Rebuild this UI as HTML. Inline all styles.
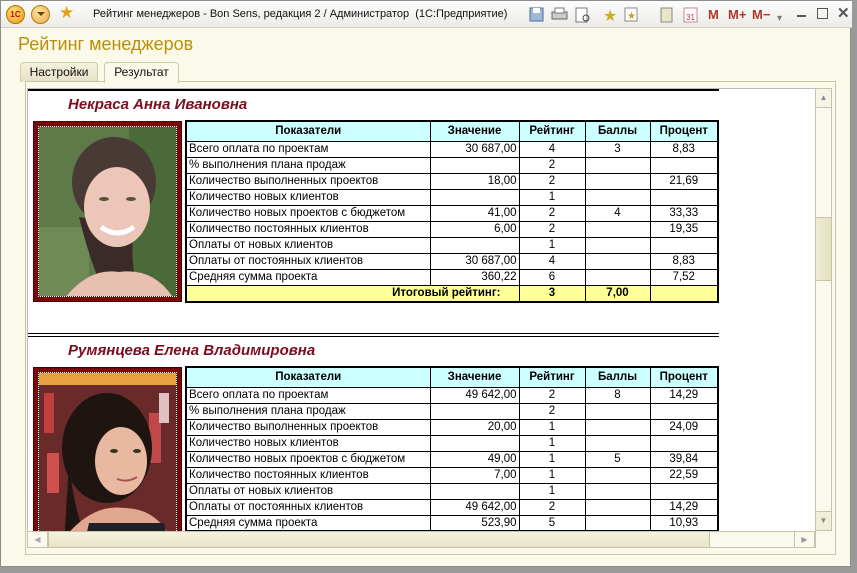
<!DOCTYPE html>
<html><head><meta charset="utf-8">
<style>
*{margin:0;padding:0;box-sizing:border-box}
body{width:857px;height:573px;overflow:hidden;background:#9a9a9a;font-family:"Liberation Sans",sans-serif;position:relative}
.abs{position:absolute}
#win{left:0;top:0;width:851px;height:567px;background:#fbf9ea;border:1px solid #8c8c8c}
#title{left:0;top:0;width:851px;height:27px;background:linear-gradient(#fdfdfd,#ecebe6);border-bottom:1px solid #cfcfc8}
.t{font-size:12px;color:#111;white-space:nowrap}
.tbl{position:absolute;border-collapse:collapse;font-size:11.5px;table-layout:fixed}
.tbl td{border:1px solid #000;height:16px;padding:0 2px;line-height:14px;white-space:nowrap;overflow:hidden}
.tbl tr.h td{background:#ccffff;font-weight:bold;text-align:center;height:20px;border-top:2px solid #000}
.tbl tr.tot td{background:#ffff99;font-weight:bold;text-align:center;height:17px}
.r{text-align:right}.c{text-align:center}
.name{font-size:15px;font-weight:bold;font-style:italic;color:#7b0e1c}
.frame{background:#7a0808;border:1px solid #4a0000}
.photo{position:absolute;left:4px;top:4px;right:4px;bottom:4px;border:1px dotted #fff;overflow:hidden}
.m{color:#b03a2a;font-weight:bold;font-size:13px}
</style></head><body>
<div id="win" class="abs">
 <div id="title" class="abs">
  <div class="abs" style="left:5px;top:4px;width:19px;height:19px;border-radius:50%;background:radial-gradient(circle at 40% 35%,#ffe27a,#e59a10);border:1px solid #b57000;font-size:8px;font-weight:bold;color:#c00;text-align:center;line-height:17px">1С</div>
  <div class="abs" style="left:30px;top:4px;width:19px;height:19px;border-radius:50%;background:radial-gradient(circle at 40% 35%,#ffe6a0,#e6a842);border:1px solid #b57a10"></div>
  <div class="abs" style="left:36px;top:11px;width:0;height:0;border-left:4px solid transparent;border-right:4px solid transparent;border-top:4px solid #6a4300"></div>
  <div class="abs" style="left:58px;top:2px;font-size:17px;color:#e2a21a">★</div>
  <div class="abs" style="left:92px;top:7px;font-size:11px;color:#111;white-space:nowrap">Рейтинг менеджеров - Bon Sens, редакция 2 / Администратор &nbsp;(1С:Предприятие)</div>
  <svg class="abs" style="left:527px;top:5px" width="180" height="18">
   <rect x="2" y="2" width="13" height="13" fill="#9fb8d8" stroke="#4a6a9a"/><rect x="5" y="2" width="7" height="5" fill="#fff"/>
   <rect x="24" y="6" width="15" height="7" fill="#ccc" stroke="#666"/><rect x="27" y="2" width="9" height="5" fill="#fff" stroke="#777"/>
   <rect x="48" y="2" width="11" height="14" fill="#fff" stroke="#777"/><circle cx="58" cy="12" r="3" fill="none" stroke="#444"/>
   <text x="75" y="15" font-size="16" fill="#c8b020">★</text>
   <rect x="97" y="2" width="12" height="13" fill="#fff" stroke="#888"/><text x="99" y="13" font-size="10" fill="#c8a020">★</text>
   <rect x="133" y="2" width="11" height="14" fill="#e8e4c8" stroke="#888"/>
   <rect x="156" y="2" width="13" height="14" fill="#fff" stroke="#c88"/><text x="158" y="14" font-size="8" fill="#c33">31</text>
  </svg>
  <div class="abs m" style="left:707px;top:6px">M</div>
  <div class="abs m" style="left:727px;top:6px">M+</div>
  <div class="abs m" style="left:751px;top:6px">M−</div>
  <div class="abs" style="left:776px;top:12px;color:#777;font-size:10px">▾</div>
  <div class="abs" style="left:796px;top:14px;width:9px;height:2px;background:#555"></div>
  <div class="abs" style="left:816px;top:7px;width:11px;height:11px;border:1.5px solid #555"></div>
  <div class="abs" style="left:836px;top:3px;font-size:15px;color:#555;font-weight:bold">✕</div>
 </div>
 <div class="abs" style="left:17px;top:33px;font-size:18px;color:#b8900a">Рейтинг менеджеров</div>
 <div class="abs t" style="left:19px;top:61px;width:78px;height:20px;border:1px solid #cfcaa8;border-bottom:none;border-radius:4px 4px 0 0;background:linear-gradient(#f4f1de,#e6e2c6);text-align:center;line-height:19px">Настройки</div>
 <div class="abs t" style="left:103px;top:61px;width:75px;height:21px;border:1px solid #cfcaa8;border-bottom:none;border-radius:4px 4px 0 0;background:#fbf9ea;text-align:center;line-height:19px;z-index:2">Результат</div>
 <div class="abs" style="left:24px;top:80px;width:811px;height:474px;border:1px solid #c8c4a8"></div>
 <div class="abs" style="left:26px;top:87px;width:789px;height:443px;background:#fff;overflow:hidden;border-left:1px solid #bbb;border-top:1px solid #bbb">
  <div class="abs" style="left:0;top:0;width:691px;height:2px;background:#000"></div>
  <div class="abs name" style="left:40px;top:7px">Некраса Анна Ивановна</div>
  <div class="abs frame" style="left:5px;top:32px;width:149px;height:181px"><div class="photo">
   <svg width="140" height="172"><rect width="140" height="172" fill="#5d7a48"/><rect x="90" width="50" height="172" fill="#4a6a3a"/><rect x="0" y="100" width="50" height="72" fill="#6e8a55"/>
   <ellipse cx="75" cy="55" rx="42" ry="45" fill="#4a3a35"/><path d="M40 90 Q55 150 70 172 L100 172 Q90 130 95 100Z" fill="#3a2a28"/>
   <ellipse cx="78" cy="80" rx="33" ry="40" fill="#ecc6b8"/><path d="M25 172 Q50 140 80 145 Q115 140 135 172Z" fill="#e8c0b0"/>
   <path d="M62 100 Q78 112 95 100" stroke="#fff" stroke-width="5" fill="none"/><ellipse cx="65" cy="72" rx="5" ry="2" fill="#553"/><ellipse cx="92" cy="72" rx="5" ry="2" fill="#553"/></svg>
  </div></div>
  <table class="tbl" style="left:157px;top:31px;width:532px;border:2px solid #000">
   <colgroup><col style="width:244px"><col style="width:89px"><col style="width:66px"><col style="width:65px"><col style="width:68px"></colgroup>
   <tr class="h"><td>Показатели</td><td>Значение</td><td>Рейтинг</td><td>Баллы</td><td>Процент</td></tr>
   <tr><td>Всего оплата по проектам</td><td class="r">30 687,00</td><td class="c">4</td><td class="c">3</td><td class="c">8,83</td></tr>
   <tr><td>% выполнения плана продаж</td><td></td><td class="c">2</td><td></td><td></td></tr>
   <tr><td>Количество выполненных проектов</td><td class="r">18,00</td><td class="c">2</td><td></td><td class="c">21,69</td></tr>
   <tr><td>Количество новых клиентов</td><td></td><td class="c">1</td><td></td><td></td></tr>
   <tr><td>Количество новых проектов с бюджетом</td><td class="r">41,00</td><td class="c">2</td><td class="c">4</td><td class="c">33,33</td></tr>
   <tr><td>Количество постоянных клиентов</td><td class="r">6,00</td><td class="c">2</td><td></td><td class="c">19,35</td></tr>
   <tr><td>Оплаты от новых клиентов</td><td></td><td class="c">1</td><td></td><td></td></tr>
   <tr><td>Оплаты от постоянных клиентов</td><td class="r">30 687,00</td><td class="c">4</td><td></td><td class="c">8,83</td></tr>
   <tr><td>Средняя сумма проекта</td><td class="r">360,22</td><td class="c">6</td><td></td><td class="c">7,52</td></tr>
   <tr class="tot"><td colspan="2" style="text-align:right;padding-right:18px">Итоговый рейтинг:</td><td>3</td><td>7,00</td><td></td></tr>
  </table>
  <div class="abs" style="left:0;top:244px;width:691px;height:1px;background:#000"></div>
  <div class="abs" style="left:0;top:247px;width:691px;height:1px;background:#000"></div>
  <div class="abs name" style="left:40px;top:253px">Румянцева Елена Владимировна</div>
  <div class="abs frame" style="left:5px;top:278px;width:149px;height:181px"><div class="photo">
   <svg width="140" height="172"><rect width="140" height="172" fill="#6a2a2a"/><rect x="0" y="0" width="140" height="12" fill="#e8a040"/>
   <rect x="5" y="20" width="10" height="40" fill="#c04040"/><rect x="8" y="80" width="12" height="40" fill="#d05050"/><rect x="110" y="40" width="12" height="50" fill="#c04848"/><rect x="120" y="20" width="10" height="30" fill="#e0c0c0"/>
   <ellipse cx="68" cy="75" rx="45" ry="55" fill="#1e1410"/><path d="M30 90 Q35 140 50 172 L25 172Z" fill="#1e1410"/>
   <ellipse cx="82" cy="88" rx="26" ry="34" fill="#e8b8a0"/><path d="M20 172 Q50 130 85 135 Q120 135 135 172Z" fill="#e0a890"/><path d="M50 150 L125 150 L130 172 L45 172Z" fill="#202028"/>
   <ellipse cx="75" cy="78" rx="4" ry="2" fill="#332"/><ellipse cx="98" cy="78" rx="4" ry="2" fill="#332"/><path d="M78 106 Q88 110 98 104" stroke="#a55" stroke-width="2" fill="none"/></svg>
  </div></div>
  <table class="tbl" style="left:157px;top:277px;width:532px;border:2px solid #000">
   <colgroup><col style="width:244px"><col style="width:89px"><col style="width:66px"><col style="width:65px"><col style="width:68px"></colgroup>
   <tr class="h"><td>Показатели</td><td>Значение</td><td>Рейтинг</td><td>Баллы</td><td>Процент</td></tr>
   <tr><td>Всего оплата по проектам</td><td class="r">49 642,00</td><td class="c">2</td><td class="c">8</td><td class="c">14,29</td></tr>
   <tr><td>% выполнения плана продаж</td><td></td><td class="c">2</td><td></td><td></td></tr>
   <tr><td>Количество выполненных проектов</td><td class="r">20,00</td><td class="c">1</td><td></td><td class="c">24,09</td></tr>
   <tr><td>Количество новых клиентов</td><td></td><td class="c">1</td><td></td><td></td></tr>
   <tr><td>Количество новых проектов с бюджетом</td><td class="r">49,00</td><td class="c">1</td><td class="c">5</td><td class="c">39,84</td></tr>
   <tr><td>Количество постоянных клиентов</td><td class="r">7,00</td><td class="c">1</td><td></td><td class="c">22,59</td></tr>
   <tr><td>Оплаты от новых клиентов</td><td></td><td class="c">1</td><td></td><td></td></tr>
   <tr><td>Оплаты от постоянных клиентов</td><td class="r">49 642,00</td><td class="c">2</td><td></td><td class="c">14,29</td></tr>
   <tr><td>Средняя сумма проекта</td><td class="r">523,90</td><td class="c">5</td><td></td><td class="c">10,93</td></tr>
  </table>
 </div>
 <div class="abs" style="left:814px;top:87px;width:17px;height:443px;background:#fbf9ee;border:1px solid #c8c4a8"></div>
 <div class="abs" style="left:814px;top:87px;width:17px;height:20px;border:1px solid #c8c4a8;background:#f6f4e4;font-size:8px;color:#888;text-align:center;line-height:18px">▲</div>
 <div class="abs" style="left:814px;top:216px;width:17px;height:64px;border:1px solid #c8c4a8;background:linear-gradient(90deg,#eeecd4,#e4e0c0)"></div>
 <div class="abs" style="left:814px;top:510px;width:17px;height:20px;border:1px solid #c8c4a8;background:#f0eed8;font-size:8px;color:#888;text-align:center;line-height:18px">▼</div>
 <div class="abs" style="left:26px;top:530px;width:789px;height:17px;background:#fbf9ee;border:1px solid #c8c4a8"></div>
 <div class="abs" style="left:26px;top:530px;width:21px;height:17px;border:1px solid #c8c4a8;font-size:8px;color:#aaa;text-align:center;line-height:15px">◀</div>
 <div class="abs" style="left:47px;top:530px;width:662px;height:17px;border:1px solid #c8c4a8;background:linear-gradient(#f4f2e0,#e8e4c8)"></div>
 <div class="abs" style="left:793px;top:530px;width:21px;height:17px;border:1px solid #c8c4a8;font-size:8px;color:#999;text-align:center;line-height:15px">▶</div>
</div>
</body></html>
